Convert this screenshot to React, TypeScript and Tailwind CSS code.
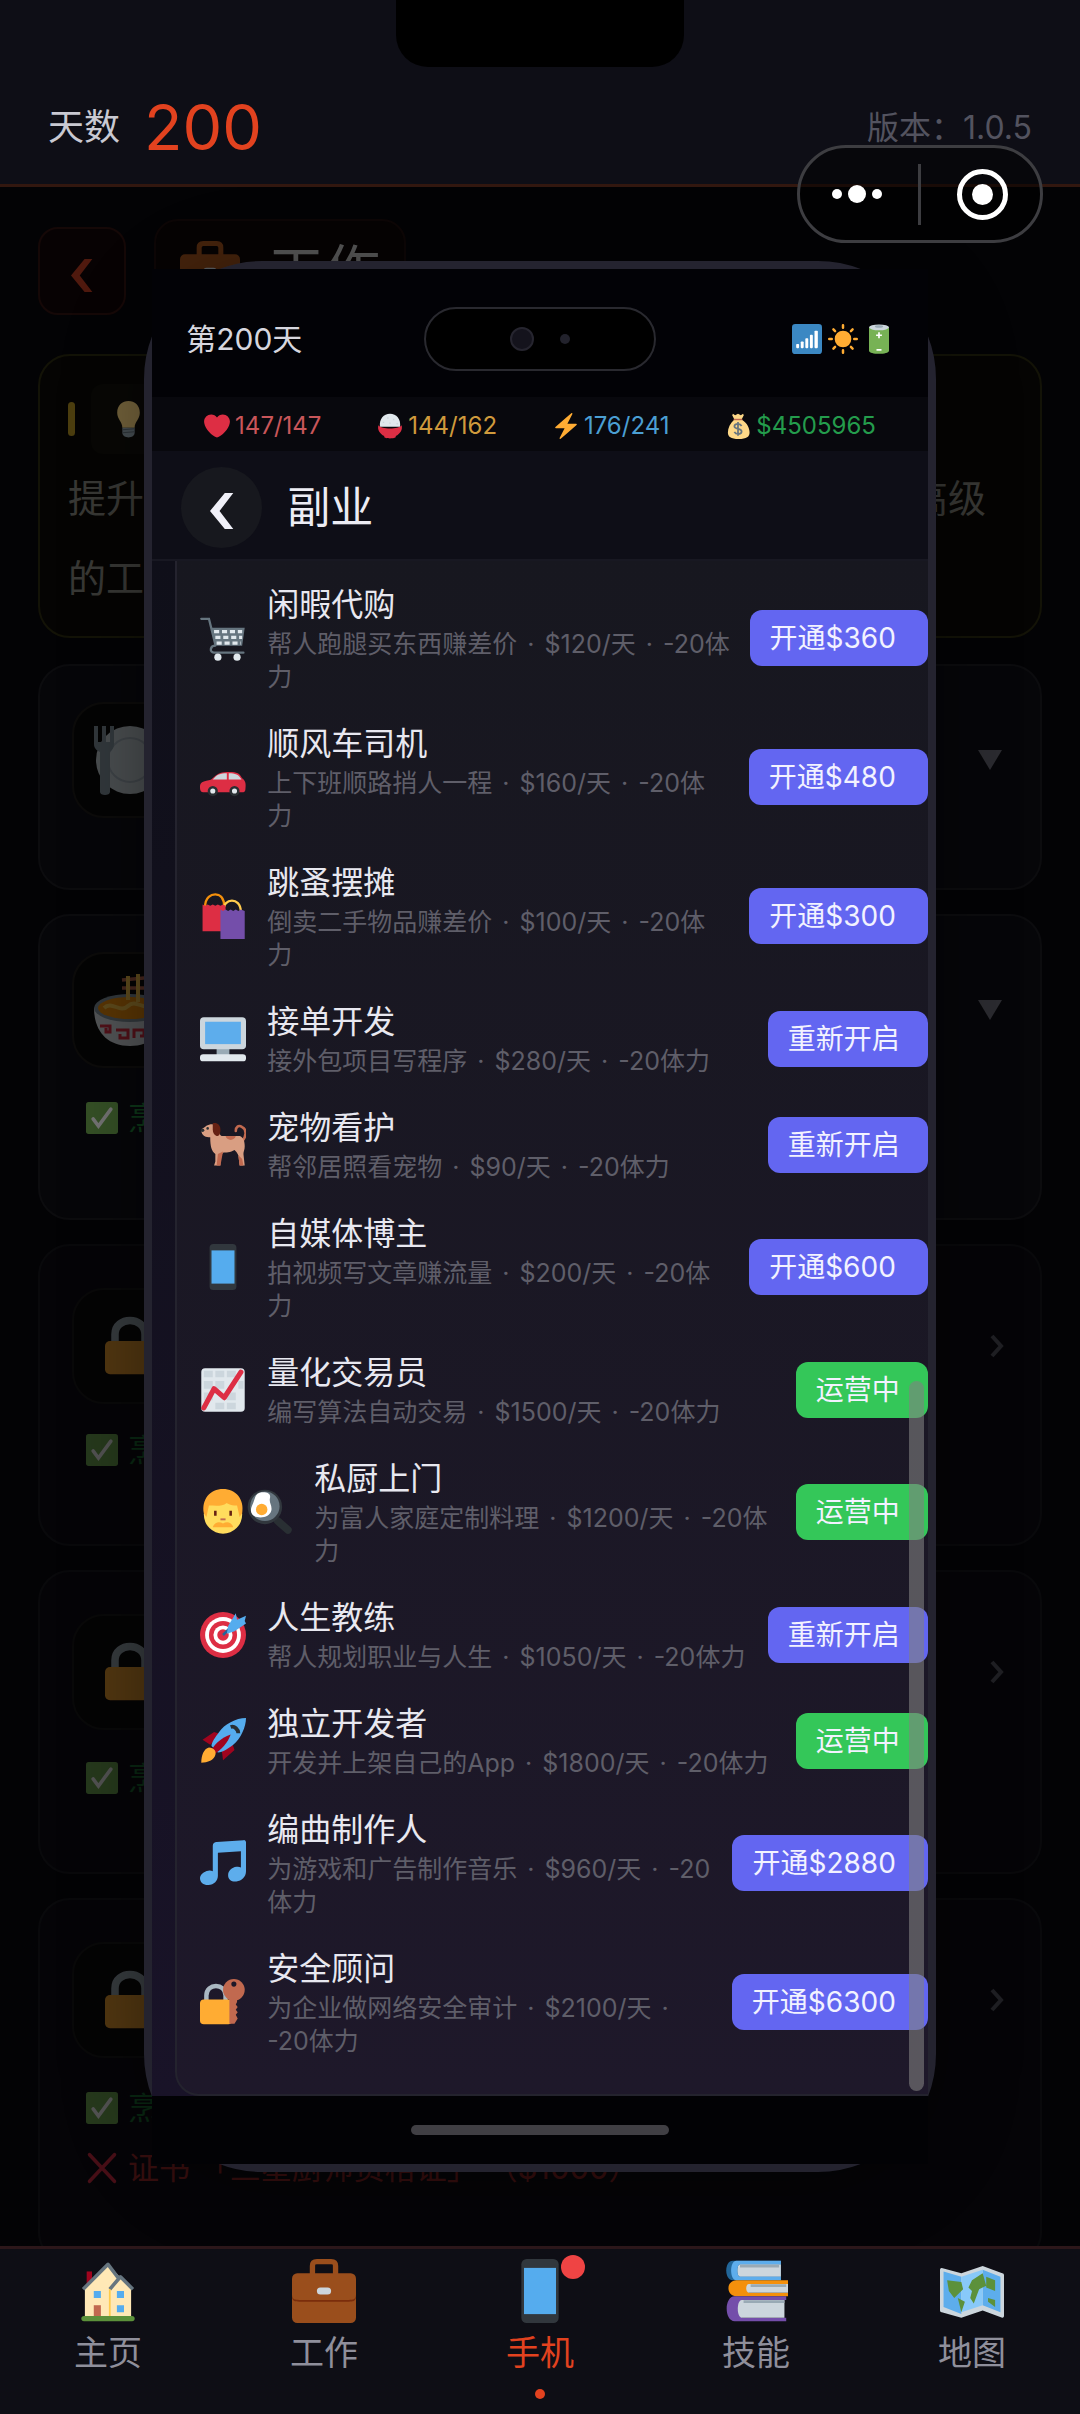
import { Fragment, useState } from "react";
import type { ReactNode } from "react";
import clsx from "clsx";

const FONT = "font-['Inter','Noto_Sans_CJK_SC',sans-serif]";

// 所有图标都画在 36x36 的画布上
const ICONS: Record<string, ReactNode> = {
  heart: (
    <path
      fill="#DD2E44"
      d="M35.885 11.833c0-5.45-4.418-9.868-9.867-9.868-3.308 0-6.227 1.633-8.018 4.129-1.791-2.496-4.71-4.129-8.017-4.129-5.45 0-9.868 4.417-9.868 9.868 0 .772.098 1.52.266 2.241C1.751 22.587 11.216 31.568 18 34.034c6.783-2.466 16.249-11.447 17.617-19.959.17-.721.268-1.469.268-2.242z"
    />
  ),
  rice: (
    <>
      <path fill="#E1E8ED" d="M4 19C3 8 9 1 18 1s15 7 14 18z" />
      <path fill="#CCD6DD" d="M8 12h2v2H8zM14 6h2v2h-2zM22 8h2v2h-2zM27 14h2v2h-2zM17 13h2v2h-2z" />
      <path fill="#DD2E44" d="M2 17c4 6 28 6 32 0 2 6-2 12-8 15v1c0 3-16 3-16 0v-1C4 29 0 23 2 17z" />
    </>
  ),
  bolt: (
    <path
      fill="#FFAC33"
      d="M32.938 15.651C32.792 15.26 32.418 15 32 15H19.925L26.89 1.458c.219-.426.106-.947-.271-1.243C26.437.071 26.218 0 26 0c-.233 0-.466.082-.653.243L18 6.588 3.347 19.243c-.316.273-.43.714-.284 1.105S3.582 21 4 21h12.075L9.11 34.542c-.219.426-.106.947.271 1.243.182.144.401.215.619.215.233 0 .466-.082.653-.243L18 29.412l14.653-12.655c.317-.273.43-.714.285-1.106z"
    />
  ),
  moneybag: (
    <>
      <path fill="#FDD888" d="M11 1l3 2 4-2 4 2 3-2 1 2-3 6c8 5 11 12 11 18 0 6-4 9-15 9S4 33 4 27c0-6 3-13 9-18L10 3z" />
      <path stroke="#BF6952" strokeWidth="2" d="M12 9h12" />
      <path fill="none" stroke="#67757F" strokeWidth="2.4" d="M23 18c-1-2-3-3-5-3-3 0-5 1-5 3.500 0 5 10 2 10 7 0 2.500-2 3.500-5 3.500-2 0-4-1-5-3M18 12.500v19" />
    </>
  ),
  signal: (
    <>
      <rect width="36" height="36" rx="4" fill="#3B88C3" />
      <g fill="#FFF">
        <rect x="5" y="24" width="3.500" height="5" rx="1" />
        <rect x="10.500" y="21" width="3.500" height="8" rx="1" />
        <rect x="16" y="17" width="3.500" height="12" rx="1" />
        <rect x="21.500" y="13" width="3.500" height="16" rx="1" />
        <rect x="27" y="8" width="4" height="21" rx="1" />
      </g>
    </>
  ),
  sun: (
    <>
      <circle cx="18" cy="18" r="10" fill="#FFAC33" />
      <path
        stroke="#FFAC33"
        strokeWidth="3"
        strokeLinecap="round"
        d="M18 1.500v3M18 31.500v3M1.500 18h3M31.500 18h3M6.500 6.500l2 2M27.500 27.500l2 2M6.500 29.500l2-2M27.500 8.500l2-2"
      />
    </>
  ),
  battery: (
    <>
      <path fill="#77B255" d="M6 4h24v28c0 5-24 5-24 0z" />
      <ellipse cx="18" cy="4" rx="12" ry="3.500" fill="#CCD6DD" />
      <ellipse cx="18" cy="3" rx="5" ry="1.500" fill="#99AAB5" />
      <path stroke="#FFF" strokeWidth="2" d="M18 10v7M14.500 13.500h7M15 31h6" />
    </>
  ),
  cart: (
    <>
      <path fill="none" stroke="#66757F" strokeWidth="1.800" d="M1 3h6l5 20M12 24c-4 0-5 5-1 5.500h23" strokeLinecap="round" />
      <path fill="#66757F" d="M8.500 10H35l-2 14H12z" />
      <path
        fill="none"
        stroke="#E1E8ED"
        strokeWidth="2.400"
        strokeDasharray="4 2.200"
        d="M11 13H33M12 17.500H33M13 22H32"
      />
      <circle cx="14" cy="33" r="2.800" fill="#E1E8ED" />
      <circle cx="29" cy="33" r="2.800" fill="#E1E8ED" />
    </>
  ),
  car: (
    <>
      <path fill="#DD2E44" d="M0 26c0-3 1-4 5-5 3-.5 4-1 6-3 3-3 6-4 12-4 6 0 8 1 10 5 3 2 3 5 2.500 9-.2 1.500-1 2-2.500 2H3c-2 0-3-1-3-4z" />
      <path fill="#CCD6DD" d="M10 20c3-4 6-5 11-5v5zM22.500 15c5 0 8 1 10 5h-10z" />
      <g fill="#E1E8ED" stroke="#292F33" strokeWidth="2">
        <circle cx="10" cy="29" r="3" />
        <circle cx="27" cy="29" r="3" />
      </g>
    </>
  ),
  bags: (
    <>
      <g fill="none" strokeWidth="1.800">
        <path stroke="#F4900C" d="M4 11C4 3 9 1 12 1s7 2 7 10" />
        <path stroke="#FFCC4D" d="M18 15c0-7 4-9 7-9s7 2 7 9" />
      </g>
      <path fill="#DD2E44" d="M2 9l2 1 2-1 2 1 2-1 2 1 2-1 2 1 2-1 2 1v20H2z" />
      <path fill="#744EAA" d="M16 13l2 1 2-1 2 1 2-1 2 1 2-1 2 1 2-1 3 1v22H16z" />
    </>
  ),
  computer: (
    <>
      <path fill="#99AAB5" d="M13 25h10v6H13z" />
      <rect y="1" width="36" height="25" rx="3" fill="#CCD6DD" />
      <rect x="4" y="4.500" width="28" height="17.500" fill="#5DADEC" />
      <rect y="30" width="36" height="5.500" rx="2.500" fill="#E1E8ED" />
    </>
  ),
  dog: (
    <>
      <path fill="none" stroke="#C1694F" strokeWidth="2" d="M33 15c3-3 4-9 0-11-3-2-5 0-5 3" strokeLinecap="round" />
      <path
        fill="#D99E82"
        d="M1 6c1-1 3-2 4-3 3-2 8-2 9 2 1 2 1 5 3 6h14c3 1 4 4 4 8 0 3-1 4-1 6l1 9h-4l-1-8c-1-2-2-3-3-4-3 2-7 2-9 2l-2 3v7h-5l1-3v-6c-3-2-4-6-4-13-3 0-7-1-7-6z"
      />
      <path fill="#C1694F" d="M16 34h-3l1-9 4-2zM20 11c1 4 7 4 8 0zM31 34l-1-8 3 3 1 5z" />
      <path fill="#662113" d="M10 1c3-1 6 1 6 5 0 3-1 5-3 5-2-1-3-3-3-5z" />
      <circle cx="6" cy="5" r="1" fill="#292F33" />
      <circle cx="2" cy="6.500" r="1.400" fill="#292F33" />
    </>
  ),
  phone: (
    <>
      <rect x="7.500" width="21" height="36" rx="3" fill="#31373D" />
      <rect x="9" y="5" width="18" height="26" fill="#55ACEE" />
    </>
  ),
  chart: (
    <>
      <rect x="1" y="1" width="34" height="34" rx="3" fill="#E1E8ED" />
      <path fill="#CCD6DD" d="M3 3h7v5H3zM12 3h7v5h-7zM21 3h7v5h-7zM3 11h7v6H3zM12 11h7v6h-7zM21 20h7v6h-7zM3 20h7v6H3zM12 28h7v5h-7zM21 28h7v5h-7zM30 11h4v6h-4z" />
      <path fill="none" stroke="#DD2E44" strokeWidth="4" strokeLinecap="round" strokeLinejoin="round" d="M3 32l8-15 8 7L32 4" />
    </>
  ),
  man: (
    <>
      <circle cx="18" cy="20" r="15" fill="#FFDC5D" />
      <path fill="#FFAC33" d="M3 19C1 8 8 0 18 0s17 8 15 19l-2 3-2-9c-6 0-8-2-8-2-4 3-9 2-14 2l-2 9z" />
      <path fill="#662113" d="M11 17h2v4h-2zM23 17h2v4h-2z" />
      <path fill="#C1694F" d="M16 23h4v1.500h-4z" />
      <path fill="#FFAC33" d="M10 30c1-4 5-5 8-3 3-2 7-1 8 3z" />
    </>
  ),
  pan: (
    <>
      <path stroke="#292F33" strokeWidth="6" strokeLinecap="round" d="M24 25l8 7" />
      <circle cx="14" cy="14" r="13.500" fill="#31373D" />
      <circle cx="14" cy="13.500" r="11.500" fill="#66757F" />
      <path fill="#FFF" d="M10 3c4-1 9 0 8 4-1 4 2 6 1 10s-6 6-11 5-6-5-4-9 2-9 6-10z" />
      <circle cx="11.500" cy="16" r="4.500" fill="#FFAC33" />
    </>
  ),
  target: (
    <>
      <circle cx="18" cy="18" r="18" fill="#DD2E44" />
      <circle cx="18" cy="18" r="14" fill="#FFF" />
      <circle cx="18" cy="18" r="11" fill="#DD2E44" />
      <circle cx="18" cy="18" r="7.500" fill="#FFF" />
      <circle cx="18" cy="18" r="4.500" fill="#DD2E44" />
      <path stroke="#226699" strokeWidth="2" d="M18 18l9-9" />
      <path fill="#55ACEE" d="M22 11l6-10 1 5 7-3-1 4 1 2-9 6-6 2z" />
    </>
  ),
  rocket: (
    <>
      <path fill="#A0041E" d="M2 17l9-6 6 2-9 8zM18 33l-1-8 8-6 2 6z" />
      <path fill="#55ACEE" d="M36 0c-8 0-17 5-21 11-3 4-6 8-6 11l5 5c4 0 8-3 12-6 6-5 10-14 10-21z" />
      <path fill="#A0041E" d="M8 28c2-7 8-12 16-15-2 6-7 12-14 16z" />
      <path fill="none" stroke="#292F33" strokeWidth="3" d="M24 7c3-1 6 2 6 5" />
      <path fill="#FFAC33" d="M1 35c0-6 2-11 6-12 4 0 6 3 5 6-1 4-6 6-11 6z" />
    </>
  ),
  music: (
    <path
      fill="#5DADEC"
      d="M34.200.1L13 1.600c-1.500.1-3 1-3 2.900v20c-1-.5-2-.7-3.500-.5C3 24.500 0 27 0 30c0 3.500 3 5.500 6.500 5.300C11 35 14 32 14 28V10l18-1.200v12.700c-1-.5-2-.7-3.500-.5C25 21.500 22 24 22 27.500s3 5.500 6.500 5c4-.5 7.500-3.500 7.500-8V2c0-1-.8-2-1.800-1.900z"
    />
  ),
  lockkey: (
    <>
      <path fill="none" stroke="#AAB8C2" strokeWidth="3.500" d="M5 18v-5c0-10 15-10 15 0v5" />
      <rect y="16" width="25" height="19.500" rx="3" fill="#FFAC33" />
      <circle cx="26.500" cy="8.500" r="8.500" fill="#C1694F" />
      <circle cx="26.500" cy="4" r="2" fill="#1D1828" />
      <path fill="#C1694F" d="M23 14h6v4l-1 2 1.500 2-1.500 2 1.500 2-1.500 2 1.500 3-2.500 4H23z" />
    </>
  ),
  lock: (
    <>
      <path fill="none" stroke="#AAB8C2" strokeWidth="4.500" d="M9 17v-6c0-11 18-11 18 0v6" />
      <rect x="3" y="15" width="30" height="20" rx="3" fill="#FFAC33" />
    </>
  ),
  briefcase: (
    <>
      <path fill="none" stroke="#9A4E1C" strokeWidth="3" d="M11.500 10V4c0-2 1-2.500 2.500-2.500h8c1.500 0 2.500.5 2.500 2.500v6" />
      <rect y="8" width="36" height="28" rx="3" fill="#9A4E1C" />
      <path fill="#7A2D0B" d="M0 20c0 3 2 3 4 3h28c2 0 4 0 4-3v1c0 3-2 3-4 3H4c-2 0-4 0-4-3z" />
      <rect x="14" y="16" width="8" height="4" rx="2" fill="#CCD6DD" />
    </>
  ),
  house: (
    <>
      <path fill="#A0041E" d="M6 7h3v8H6z" />
      <path fill="#FFE8B6" d="M18 3L5 17v16h26V17z" />
      <path fill="none" stroke="#66757F" strokeWidth="2" strokeLinejoin="round" d="M4 17L18 3l6 8M19 17l6-7 7 7" />
      <path stroke="#FFCC4D" d="M19 17v16" />
      <path fill="#55ACEE" d="M10 18h4v4h-4zM23 18h4v4h-4zM23 26h4v4h-4z" />
      <path fill="#C1694F" d="M10 26h4v7h-4z" />
      <rect x="3" y="32" width="30" height="3" rx="1.500" fill="#5C913B" />
    </>
  ),
  books: (
    <>
      <path fill="#226699" d="M5 1h27v11H5C0 12 0 1 5 1z" />
      <path fill="#CCD6DD" d="M9 3h23v7H9c-2 0-2-7 0-7z" />
      <path fill="#5DADEC" d="M7 1h25v2H9c-2 0-2 7 0 7h23v2H7C3 12 3 1 7 1z" />
      <path fill="#F4900C" d="M7 12h29v2H14v5h22v2H7c-6 0-6-9 0-9z" />
      <path fill="#CCD6DD" d="M14 14h22v5H14c-2 0-2-5 0-5z" />
      <path fill="#744EAA" d="M6 21h29v2H10v10h25v2H6c-6 0-6-14 0-14z" />
      <path fill="#CCD6DD" d="M10 23h24v10H10c-3 0-3-10 0-10z" />
      <path stroke="#99AAB5" strokeWidth="1.500" d="M9 4h22M15 15h20M11 24h23" />
    </>
  ),
  map: (
    <>
      <path fill="#CCD6DD" d="M0 6c0-1 1-1 1-1l11 3 12-4 11 4c1 0 1 1 1 1v23c0 1-1 1-1 1l-11-4-12 4L1 30s-1 0-1-1z" />
      <path fill="#5DADEC" d="M2 7l10 3v21L2 27zM24 6l10 4v20l-10-4z" />
      <path fill="#88C9F9" d="M12 10l12-4v20l-12 4z" />
      <path fill="#5C913B" d="M4 12l8 1 1 4-5 5-3-4zM10 22l4 2-2 6zM18 12l6-4 2 7-4 2-3 8-2-3 1-4-2-2zM26 10l5 2v6l-5-2zM27 22l4 1v4l-4-3z" />
    </>
  ),
  bulb: (
    <>
      <path fill="#FFD983" d="M29 11.500C29 4 24 0 18 0S7 4 7 11.500C7 18 12 20 12 26h12c0-6 5-8 5-14.500z" />
      <path fill="#99AAB5" d="M12 26h12v5c0 6-12 6-12 0z" />
      <path stroke="#66757F" d="M12 28l12-1M12 31l12-1" />
    </>
  ),
  plate: (
    <>
      <circle cx="18" cy="18" r="17" fill="#CCD6DD" />
      <circle cx="18" cy="18" r="11" fill="none" stroke="#AAB8C2" />
      <path fill="#8899A6" d="M0 1h2v8h2V1h2v8h2V1h2v9c0 2-1 3-2 4v20c0 2-5 2-5 0V14c-2-1-3-2-3-4z" />
    </>
  ),
  noodles: (
    <>
      <path stroke="#C1694F" strokeWidth="1.800" d="M14 3l22-2M14 7h22" />
      <path fill="#E1E8ED" d="M0 17c0 11 6 19 18 19s18-8 18-19z" />
      <ellipse cx="18" cy="17" rx="18" ry="7" fill="#8899A6" />
      <ellipse cx="18" cy="17" rx="16" ry="5.500" fill="#F4900C" />
      <path fill="none" stroke="#FFCC4D" strokeWidth="2" d="M5 17c4-4 8 3 12-1s8 3 12-1M17 1v12M22 0v14" />
      <path fill="none" stroke="#DD2E44" strokeWidth="1.500" d="M3 26h5v3H6v-2M11 28h6v4h-4v-2M20 32v-4h5v3h-2M32 29v-3h-4v3" />
    </>
  ),
  check: (
    <>
      <rect width="36" height="36" rx="3" fill="#77B255" />
      <path fill="none" stroke="#FFF" strokeWidth="4" strokeLinecap="round" d="M8 19l6 8L28 8" />
    </>
  ),
  cross: <path stroke="#DD2E44" strokeWidth="4" strokeLinecap="round" d="M4 3l28 30M32 3L4 33" />,
};

function Emoji({ name, className }: { name: string; className?: string }) {
  return (
    <svg viewBox="0 0 36 36" className={clsx("shrink-0", className)} aria-hidden="true">
      {ICONS[name]}
    </svg>
  );
}

// 粗体的返回箭头
function Chevron({ className }: { className?: string }) {
  return (
    <svg viewBox="0 0 23 34" className={className} aria-hidden="true">
      <path fill="currentColor" d="M14 0h8L9 17l13 17h-8L0 17z" />
    </svg>
  );
}

type Status = "price" | "reopen" | "running";

interface SideJob {
  icons: string[];
  name: string;
  desc: string[];
  action: string;
  status: Status;
}

const sideJobs: SideJob[] = [
  { icons: ["cart"], name: "闲暇代购", desc: ["帮人跑腿买东西赚差价 · $120/天 · -20体", "力"], action: "开通$360", status: "price" },
  { icons: ["car"], name: "顺风车司机", desc: ["上下班顺路捎人一程 · $160/天 · -20体", "力"], action: "开通$480", status: "price" },
  { icons: ["bags"], name: "跳蚤摆摊", desc: ["倒卖二手物品赚差价 · $100/天 · -20体", "力"], action: "开通$300", status: "price" },
  { icons: ["computer"], name: "接单开发", desc: ["接外包项目写程序 · $280/天 · -20体力"], action: "重新开启", status: "reopen" },
  { icons: ["dog"], name: "宠物看护", desc: ["帮邻居照看宠物 · $90/天 · -20体力"], action: "重新开启", status: "reopen" },
  { icons: ["phone"], name: "自媒体博主", desc: ["拍视频写文章赚流量 · $200/天 · -20体", "力"], action: "开通$600", status: "price" },
  { icons: ["chart"], name: "量化交易员", desc: ["编写算法自动交易 · $1500/天 · -20体力"], action: "运营中", status: "running" },
  { icons: ["man", "pan"], name: "私厨上门", desc: ["为富人家庭定制料理 · $1200/天 · -20体", "力"], action: "运营中", status: "running" },
  { icons: ["target"], name: "人生教练", desc: ["帮人规划职业与人生 · $1050/天 · -20体力"], action: "重新开启", status: "reopen" },
  { icons: ["rocket"], name: "独立开发者", desc: ["开发并上架自己的App · $1800/天 · -20体力"], action: "运营中", status: "running" },
  { icons: ["music"], name: "编曲制作人", desc: ["为游戏和广告制作音乐 · $960/天 · -20", "体力"], action: "开通$2880", status: "price" },
  { icons: ["lockkey"], name: "安全顾问", desc: ["为企业做网络安全审计 · $2100/天 · ", "-20体力"], action: "开通$6300", status: "price" },
];

const actionStyle: Record<Status, string> = {
  price: "bg-[#6366f1] pr-8",
  reopen: "bg-[#6366f1] pr-7",
  running: "bg-[#34c759] pr-7",
};

const stats = [
  { icon: "heart", text: "147/147", color: "text-[#c9565a]" },
  { icon: "rice", text: "144/162", color: "text-[#cf9a3c]" },
  { icon: "bolt", text: "176/241", color: "text-[#4b9fd3]" },
  { icon: "moneybag", text: "$4505965", color: "text-[#249c4c]" },
];

const tabs = [
  { icon: "house", label: "主页" },
  { icon: "briefcase", label: "工作" },
  { icon: "phone", label: "手机" },
  { icon: "books", label: "技能" },
  { icon: "map", label: "地图" },
];

function DescLine({ text }: { text: string }) {
  return (
    <p className="text-[25px] leading-[33px] text-[#5f5e69]">
      {text.split("·").map((part, i) => (
        <Fragment key={i}>
          {i > 0 && <span className="mx-[3px]">·</span>}
          {part}
        </Fragment>
      ))}
    </p>
  );
}

function SideJobRow({ job }: { job: SideJob }) {
  return (
    <li className="flex items-center pt-[13px] pb-[14px] pl-[23px]">
      <div className="flex gap-px mr-[21px]">
        {job.icons.map((icon) => (
          <Emoji key={icon} name={icon} className="size-[46px]" />
        ))}
      </div>
      <div className="flex-1 min-w-0 whitespace-nowrap">
        <h3 className="text-[32px] leading-[46px] text-[#e8e8f0]">{job.name}</h3>
        {job.desc.map((line) => (
          <DescLine key={line} text={line} />
        ))}
      </div>
      <button
        className={clsx(
          "shrink-0 h-14 pl-5 rounded-xl text-[28px] leading-[56px] text-[#f2f2ff] whitespace-nowrap",
          actionStyle[job.status],
        )}
      >
        {job.action}
      </button>
    </li>
  );
}

function JobCard({ icon, locked, children }: { icon: string; locked?: boolean; children?: ReactNode }) {
  return (
    <section
      className={clsx(
        "rounded-[32px] border-2 border-[#1b1b21] bg-[#0e0e14] px-8",
        locked ? "opacity-70 pt-[42px] pb-16" : "pt-9 pb-[70px]",
      )}
    >
      <div className="flex items-center justify-between">
        <div className="size-[116px] rounded-[32px] border-2 border-[#1c1a18] bg-[#0b0a0a] flex items-center justify-center">
          <Emoji name={icon} className={locked ? "size-[60px]" : "size-[72px] opacity-80"} />
        </div>
        {locked ? (
          <svg viewBox="0 0 14 24" className="w-[14px] h-6 mr-1" aria-hidden="true">
            <path d="M2 2l9 10-9 10" fill="none" stroke="#60606a" strokeWidth="4" />
          </svg>
        ) : (
          <svg viewBox="0 0 24 20" className="w-6 h-5 mr-[6px]" aria-hidden="true">
            <path d="M0 0h24L12 20z" fill="#60606a" />
          </svg>
        )}
      </div>
      {children}
    </section>
  );
}

function Requirement({ ok, children }: { ok?: boolean; children: ReactNode }) {
  return (
    <div
      className={clsx(
        "flex items-center gap-[10px] h-[60px] px-[14px] text-[31px]",
        ok ? "text-[#1d7a35]" : "text-[#a82a2a]",
      )}
    >
      <Emoji name={ok ? "check" : "cross"} className="size-8" />
      <span className="whitespace-nowrap">{children}</span>
    </div>
  );
}

function JobsPage() {
  return (
    <div className="px-[38px] pt-8 flex flex-col">
      <div className="flex items-center gap-7 h-[104px]">
        <button
          aria-label="返回"
          className="size-[88px] pt-2 rounded-[20px] border-2 border-[#301210] bg-[#100608] text-[#b0381f] flex items-center justify-center"
        >
          <Chevron className="h-[33px]" />
        </button>
        <h1 className="flex items-center gap-7 h-full px-6 rounded-[24px] border-2 border-[#1e0f0e] bg-[#0e0708] text-[56px] text-[#c4c4c4]">
          <Emoji name="briefcase" className="size-[60px]" />
          工作
        </h1>
      </div>

      <section className="mt-[31px] rounded-[32px] border-2 border-[#2c2a10] bg-[#0c0b07] px-7 pt-7 pb-[18px]">
        <div className="flex items-center gap-4 mb-1">
          <div className="w-[7px] h-[34px] rounded bg-[#a88a22]" />
          <div className="h-[70px] rounded-xl bg-[#12110c] px-[19px] flex items-center">
            <Emoji name="bulb" className="size-[37px]" />
          </div>
        </div>
        <p className="flex justify-between pr-[26px] text-[38px] leading-[80px] text-[#7c7c75]">
          <span>提升</span>
          <span>高级</span>
        </p>
        <p className="text-[38px] leading-[80px] text-[#7c7c75]">的工</p>
      </section>

      <div className="mt-[26px] flex flex-col gap-6">
        <JobCard icon="plate" />
        <JobCard icon="noodles">
          <div className="pt-5">
            <Requirement ok>烹</Requirement>
          </div>
        </JobCard>
        <JobCard icon="lock" locked>
          <div className="pt-4">
            <Requirement ok>烹</Requirement>
          </div>
        </JobCard>
        <JobCard icon="lock" locked>
          <div className="pt-[18px]">
            <Requirement ok>烹</Requirement>
          </div>
        </JobCard>
        <JobCard icon="lock" locked>
          <div className="pt-5">
            <Requirement ok>烹</Requirement>
            <Requirement>证书 「三星厨师资格证」 （$1000）</Requirement>
          </div>
        </JobCard>
      </div>
    </div>
  );
}

function PhoneModal() {
  return (
    <div className="w-[73.3%] rounded-[118px] border-8 border-[#24232f] shadow-[0_10px_80px_rgba(0,0,0,0.4)] flex flex-col">
      {/* 手机状态栏 */}
      <div className="grid grid-cols-3 items-center h-32 px-[34px] pt-3 bg-[#020206]">
        <div className="whitespace-nowrap text-[30px] text-[#d6d6de]">第200天</div>
        <div className="justify-self-center w-[232px] h-16 rounded-full border-2 border-[#29292f] bg-black flex items-center justify-center gap-[26px]">
          <div className="size-6 rounded-full border-2 border-[#26252f] bg-[#14131c]" />
          <div className="size-[10px] rounded-full bg-[#22222c]" />
        </div>
        <div className="justify-self-end flex gap-[6px]">
          <Emoji name="signal" className="size-[30px]" />
          <Emoji name="sun" className="size-[30px]" />
          <Emoji name="battery" className="size-[30px]" />
        </div>
      </div>

      <div className="flex items-center justify-around h-[54px] pt-1 px-6 bg-[#08080d]">
        {stats.map((s) => (
          <div key={s.icon} className={clsx("flex items-center gap-[5px] text-[24px]", s.color)}>
            <Emoji name={s.icon} className="size-[26px]" />
            {s.text}
          </div>
        ))}
      </div>

      <div className="flex items-center gap-[25px] h-[110px] px-[29px] pt-1 bg-[#0e0e17] border-b-2 border-[#181822]">
        <button
          aria-label="返回"
          className="size-[81px] pt-2 rounded-full bg-[#17181e] text-[#f0f0f8] flex items-center justify-center"
        >
          <Chevron className="h-9" />
        </button>
        <h2 className="text-[43px] text-[#ececf4]">副业</h2>
      </div>

      <div className="relative pl-[23px] bg-linear-to-b from-[#0f0f19] to-[#191328]">
        <ul className="rounded-bl-[24px] border-l-2 border-b-2 border-[#24232e] bg-linear-to-b from-[#17171f] to-[#1e182a] pt-2 pb-[22px]">
          {sideJobs.map((job) => (
            <SideJobRow key={job.name} job={job} />
          ))}
        </ul>
        {/* 滚动条 */}
        <div className="absolute right-1 bottom-[5px] w-[15px] h-[710px] rounded-full bg-[#808080]/60" />
      </div>

      <div className="h-[68px] bg-[#020205] flex items-center justify-center">
        <div className="w-1/3 h-[10px] rounded-full bg-[#403f44]" />
      </div>
    </div>
  );
}

export default function App() {
  const [activeTab, setActiveTab] = useState("手机");

  return (
    <div className={clsx("relative h-screen flex flex-col overflow-hidden bg-[#08070c]", FONT)}>
      <header className="shrink-0 h-[187px] px-12 pt-[70px] flex justify-between border-b-[3px] border-[#32170f] bg-[#0e0e16]">
        <div className="flex items-center gap-6">
          <span className="text-[36px] text-[#c9c9d2]">天数</span>
          <span className="text-[63px] leading-none text-[#e2421f]">200</span>
        </div>
        <span className="text-[32px] leading-[116px] text-[#53535f]">版本：1.0.5</span>
      </header>

      {/* 刘海 */}
      <div className="absolute top-0 left-1/2 -translate-x-1/2 w-[288px] h-[67px] rounded-b-[32px] bg-black" />

      {/* 小程序胶囊按钮 */}
      <div className="absolute z-20 top-[145px] right-[37px] w-[246px] h-[98px] rounded-full border-[3px] border-[#3d3d41] bg-black/50 flex items-center">
        <button aria-label="更多" className="w-[118px] pr-1 h-full flex items-center justify-center gap-[6px]">
          <span className="size-[10px] rounded-full bg-white" />
          <span className="size-[18px] rounded-full bg-white" />
          <span className="size-[10px] rounded-full bg-white" />
        </button>
        <span className="w-[3px] h-[61px] bg-[#3d3d41]" />
        <button aria-label="关闭" className="flex-1 pl-1 h-full flex items-center justify-center">
          <span className="size-[51px] rounded-full border-[5px] border-white flex items-center justify-center">
            <span className="size-[21px] rounded-full bg-white" />
          </span>
        </button>
      </div>

      <main className="relative flex-1 min-h-0 overflow-hidden">
        <JobsPage />
        <div className="absolute inset-0 bg-black/55 flex items-center justify-center">
          <PhoneModal />
        </div>
      </main>

      <nav className="relative z-10 shrink-0 h-[168px] grid grid-cols-5 border-t-[3px] border-[#2c171a] bg-[#0e0e15]">
        {tabs.map((tab) => {
          const active = tab.label === activeTab;
          return (
            <button
              key={tab.label}
              onClick={() => setActiveTab(tab.label)}
              className={clsx(
                "flex flex-col items-center pt-[10px] text-[34px]",
                active ? "text-[#e2421f]" : "text-[#8f8f9b]",
              )}
            >
              <span className="relative">
                <Emoji name={tab.icon} className="size-16" />
                {tab.label === "手机" && (
                  <span className="absolute -top-1 -right-[13px] size-6 rounded-full bg-[#ef4444]" />
                )}
              </span>
              <span className="mt-1 leading-[52px]">{tab.label}</span>
              {active && <span className="mt-[10px] size-[10px] rounded-full bg-[#e2421f]" />}
            </button>
          );
        })}
      </nav>
    </div>
  );
}
